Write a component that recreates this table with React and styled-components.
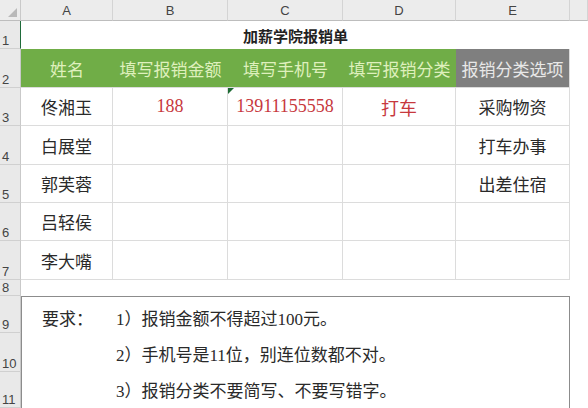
import React from "react";
import styled, { createGlobalStyle, css } from "styled-components";

const GlobalStyle = createGlobalStyle`
  html, body { margin: 0; padding: 0; background: #ffffff; }
  body { font-family: "Noto Sans CJK SC", "Noto Sans", sans-serif; }
`;

const Sheet = styled.div`
  display: grid;
  width: 588px;
  height: 408px;
  overflow: hidden;
  grid-template-columns: 21px 92px 115px 115px 113px 114px 1fr;
  grid-template-rows: 21px 28px 39px 38px 39px 38px 38px 39px 16px 37px 39px 1fr;
  background: #ffffff;
`;

const Corner = styled.div`
  position: relative;
  background: #ececec;
  border-right: 1px solid #c9c9c9;
  border-bottom: 1px solid #bdbdbd;
  box-sizing: border-box;
  &::after {
    content: "";
    position: absolute;
    right: 3px;
    bottom: 3px;
    width: 0;
    height: 0;
    border-left: 9px solid transparent;
    border-bottom: 9px solid #b9b9b9;
  }
`;

const ColHead = styled.div`
  background: #ececec;
  border-right: 1px solid #d4d4d4;
  border-bottom: 1px solid #bdbdbd;
  box-sizing: border-box;
  display: flex;
  align-items: center;
  justify-content: center;
  font-family: "Liberation Sans", Arial, sans-serif;
  font-size: 13px;
  color: #444444;
`;

const RowHead = styled.div`
  background: #e9e9e9;
  border-right: 1px solid ${(p) => (p.$active ? "#1f6b3a" : "#c9c9c9")};
  border-bottom: 1px solid #d0d0d0;
  box-sizing: border-box;
  display: flex;
  align-items: flex-end;
  padding: 0 0 0 2px;
  font-family: "Liberation Sans", Arial, sans-serif;
  font-size: 13px;
  line-height: 15px;
  color: #444444;
`;

const Title = styled.div`
  grid-column: 2 / 7;
  display: flex;
  align-items: center;
  justify-content: center;
  font-size: 15px;
  font-weight: 700;
  color: #222222;
  box-sizing: border-box;
`;

const Cell = styled.div`
  position: relative;
  box-sizing: border-box;
  display: flex;
  align-items: center;
  justify-content: center;
  white-space: nowrap;
  font-size: 17px;
  color: #2a2a2a;
  border-right: 1px solid #dcdcdc;
  border-bottom: 1px solid #dcdcdc;
  ${(p) =>
    p.$kind === "green" &&
    css`
      background: #70ad47;
      color: #dff0bd;
      border-right: none;
      border-bottom: 1px solid #dcdcdc;
    `}
  ${(p) =>
    p.$kind === "gray" &&
    css`
      background: #7f7f7f;
      color: #e8e8e8;
      border-right: 1px solid #dcdcdc;
    `}
  ${(p) =>
    p.$kind === "red" &&
    css`
      color: #c7383d;
      font-family: "Liberation Serif", "Noto Sans CJK SC", serif;
      font-size: 18px;
    `}
  ${(p) =>
    p.$kind === "empty" &&
    css`
      border-right: none;
      border-bottom: none;
    `}
  ${(p) =>
    p.$flag &&
    css`
      &::before {
        content: "";
        position: absolute;
        left: 0;
        top: 0;
        width: 0;
        height: 0;
        border-top: 6px solid #1d6b33;
        border-right: 6px solid transparent;
      }
    `}
`;

const Spacer = styled.div`
  grid-column: 2 / 8;
`;

const NoteBox = styled.div`
  grid-column: 2 / 7;
  grid-row: 10 / 13;
  box-sizing: border-box;
  border: 1.5px solid #8c8c8c;
  border-bottom: none;
  background: #ffffff;
  display: grid;
  grid-template-columns: 74px 1fr;
  align-content: start;
  padding: 5px 0 0 20px;
  font-family: "Liberation Serif", "Noto Sans CJK SC", serif;
  font-size: 17px;
  line-height: 36px;
  color: #2a2a2a;
`;

const NoteLabel = styled.div`
  grid-row: 1 / 4;
`;

const NoteLine = styled.div`
  white-space: nowrap;
`;

const rows = [
  ["佟湘玉", "188", "13911155558", "打车", "采购物资"],
  ["白展堂", "", "", "", "打车办事"],
  ["郭芙蓉", "", "", "", "出差住宿"],
  ["吕轻侯", "", "", "", ""],
  ["李大嘴", "", "", "", ""],
];

export default function App() {
  return (
    <>
      <GlobalStyle />
      <Sheet>
        <Corner />
        {["A", "B", "C", "D", "E", ""].map((c, i) => (
          <ColHead key={i}>{c}</ColHead>
        ))}

        <RowHead $active>1</RowHead>
        <Title>加薪学院报销单</Title>
        <Cell $kind="empty" />

        <RowHead>2</RowHead>
        <Cell $kind="green">姓名</Cell>
        <Cell $kind="green">填写报销金额</Cell>
        <Cell $kind="green">填写手机号</Cell>
        <Cell $kind="green">填写报销分类</Cell>
        <Cell $kind="gray">报销分类选项</Cell>
        <Cell $kind="empty" />

        {rows.map((r, ri) => (
          <React.Fragment key={ri}>
            <RowHead>{ri + 3}</RowHead>
            <Cell>{r[0]}</Cell>
            <Cell $kind={r[1] ? "red" : undefined}>{r[1]}</Cell>
            <Cell $kind={r[2] ? "red" : undefined} $flag={ri === 0}>
              {r[2]}
            </Cell>
            <Cell $kind={r[3] ? "red" : undefined}>{r[3]}</Cell>
            <Cell>{r[4]}</Cell>
            <Cell $kind="empty" />
          </React.Fragment>
        ))}

        <RowHead>8</RowHead>
        <Spacer />

        <NoteBox>
          <NoteLabel>要求：</NoteLabel>
          <NoteLine>1）报销金额不得超过100元。</NoteLine>
          <NoteLine>2）手机号是11位，别连位数都不对。</NoteLine>
          <NoteLine>3）报销分类不要简写、不要写错字。</NoteLine>
        </NoteBox>

        <RowHead>9</RowHead>
        <Cell $kind="empty" />
        <RowHead>10</RowHead>
        <Cell $kind="empty" />
        <RowHead>11</RowHead>
        <Cell $kind="empty" />
      </Sheet>
    </>
  );
}
